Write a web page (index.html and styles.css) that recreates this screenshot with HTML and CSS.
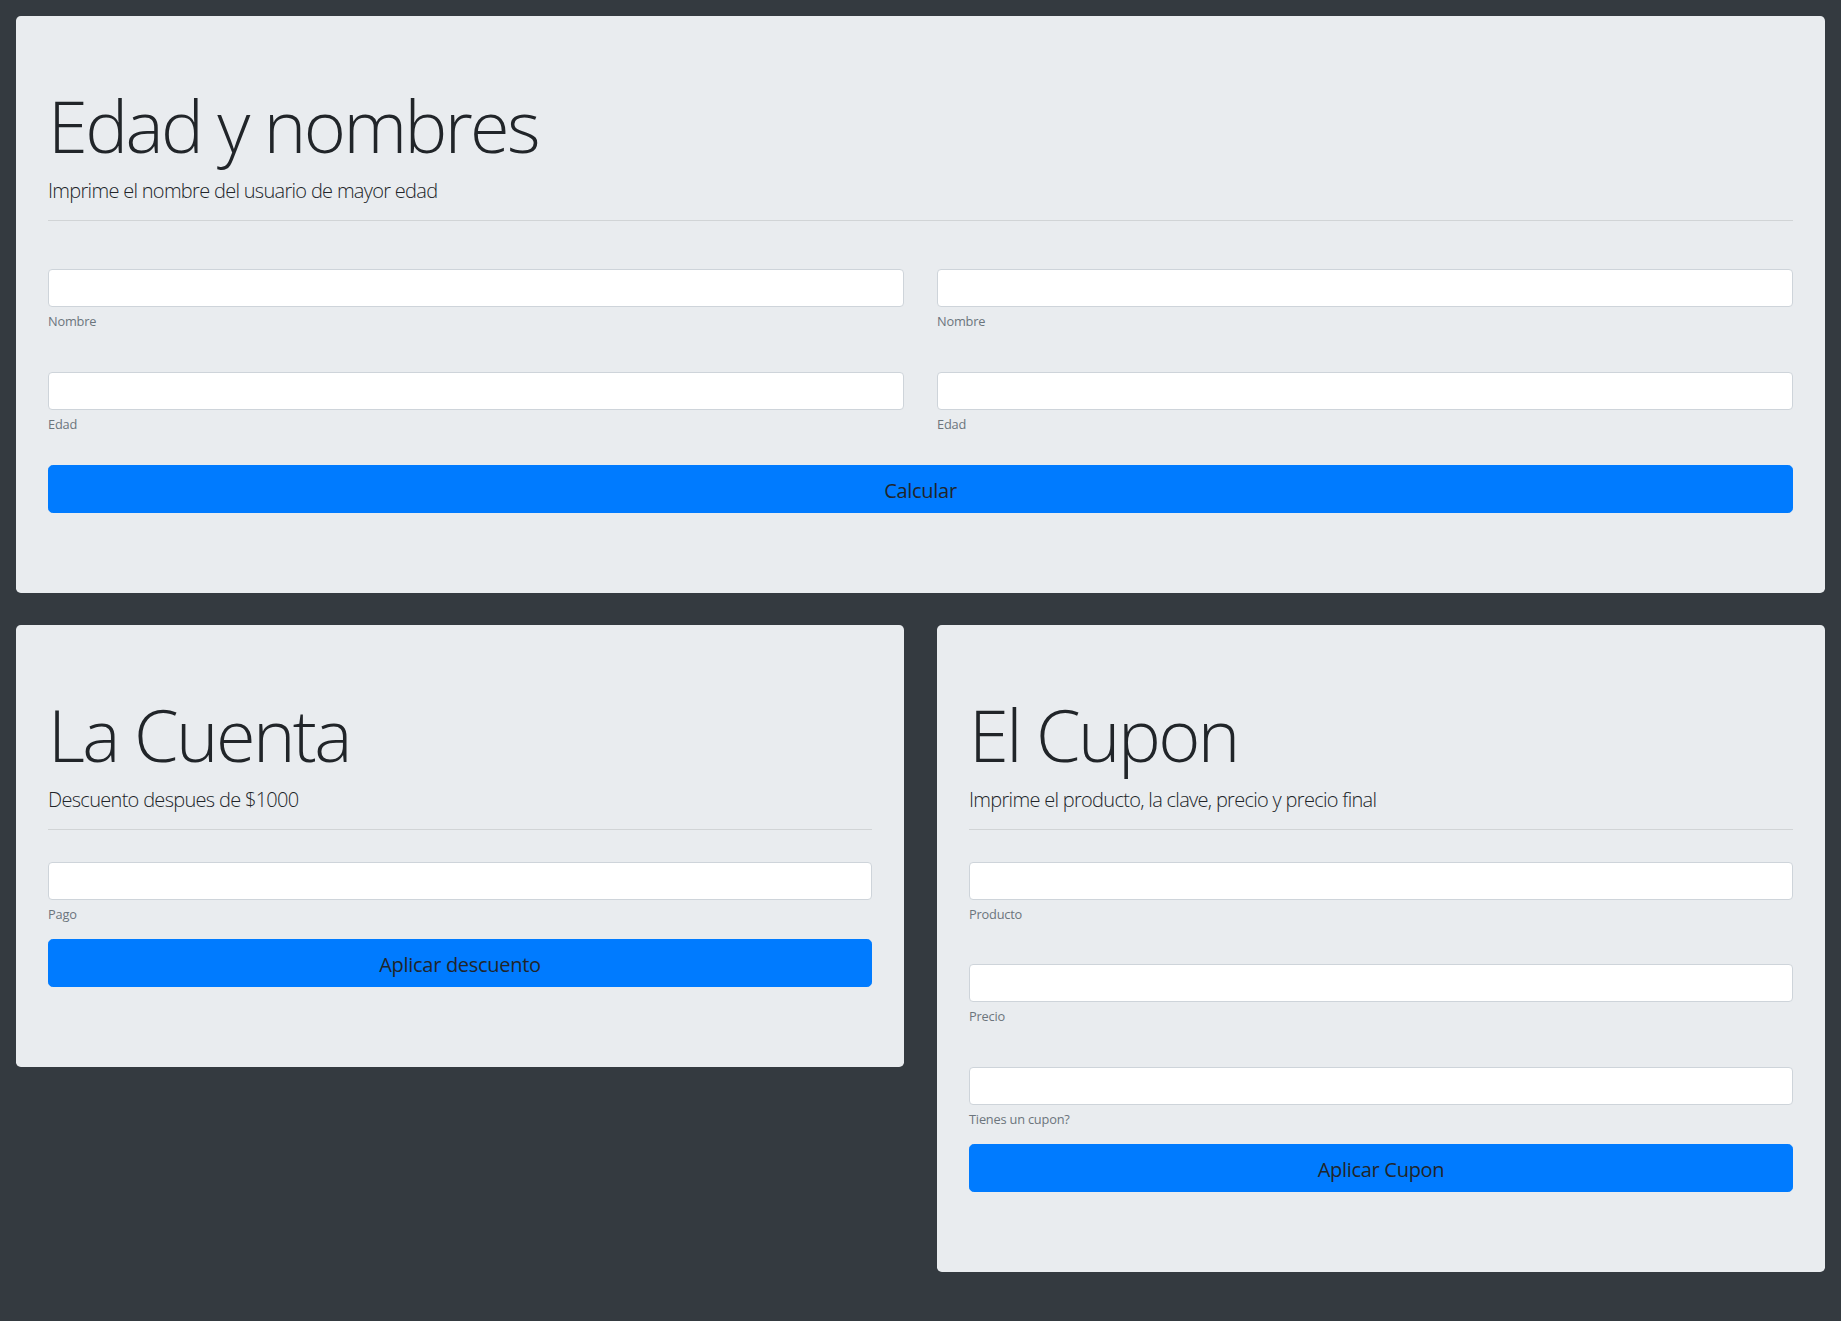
FILE: index.html
```html
<!DOCTYPE html>
<html lang="es">
<head>
<meta charset="utf-8">
<title>Ejercicios</title>
<link rel="stylesheet" href="styles.css">
</head>
<body>
<main class="page">
  <section class="jumbo">
    <h1 class="display">Edad y nombres</h1>
    <p class="lead">Imprime el nombre del usuario de mayor edad</p>
    <hr class="rule">
    <div class="pair-grid">
      <div class="field-stack">
        <div class="field">
          <input class="control" type="text">
          <small class="hint">Nombre</small>
        </div>
        <div class="field">
          <input class="control" type="text">
          <small class="hint">Edad</small>
        </div>
      </div>
      <div class="field-stack">
        <div class="field">
          <input class="control" type="text">
          <small class="hint">Nombre</small>
        </div>
        <div class="field">
          <input class="control" type="text">
          <small class="hint">Edad</small>
        </div>
      </div>
    </div>
    <button class="btn" type="button">Calcular</button>
  </section>

  <div class="card-row">
    <section class="jumbo">
      <h1 class="display">La Cuenta</h1>
      <p class="lead">Descuento despues de $1000</p>
      <hr class="rule">
      <div class="field-stack">
        <div class="field">
          <input class="control" type="text">
          <small class="hint">Pago</small>
        </div>
      </div>
      <button class="btn" type="button">Aplicar descuento</button>
    </section>

    <section class="jumbo">
      <h1 class="display">El Cupon</h1>
      <p class="lead">Imprime el producto, la clave, precio y precio final</p>
      <hr class="rule">
      <div class="field-stack">
        <div class="field">
          <input class="control" type="text">
          <small class="hint">Producto</small>
        </div>
        <div class="field">
          <input class="control" type="text">
          <small class="hint">Precio</small>
        </div>
        <div class="field">
          <input class="control" type="text">
          <small class="hint">Tienes un cupon?</small>
        </div>
      </div>
      <button class="btn" type="button">Aplicar Cupon</button>
    </section>
  </div>
</main>
</body>
</html>
```

FILE: styles.css
```css
* {
  box-sizing: border-box;
}

html, body {
  margin: 0;
  padding: 0;
}

body {
  background: #343a40;
  font-family: "Open Sans", "Noto Sans", "Liberation Sans", sans-serif;
  font-size: 16px;
  line-height: 1.5;
  color: #212529;
  min-height: 1321px;
}

.page {
  padding: 16px;
  display: flex;
  flex-direction: column;
  gap: 32px;
}

.jumbo {
  background: #e9ecef;
  border-radius: 4.8px;
  padding: 64px 32px;
  display: flex;
  flex-direction: column;
}

.display {
  margin: 0 0 6px;
  padding-top: 2px;
  font-size: 72px;
  font-weight: 300;
  line-height: 86.4px;
  letter-spacing: -2.6px;
  color: #212529;
}

.lead {
  margin: 0;
  padding-top: 2px;
  font-size: 20px;
  font-weight: 300;
  line-height: 30px;
  letter-spacing: -0.7px;
  color: #212529;
}

.rule {
  margin: 14px 0 32px;
  border: 0;
  border-top: 1px solid rgba(0, 0, 0, 0.1);
  height: 0;
}

.pair-grid {
  display: grid;
  grid-template-columns: 1fr 1fr;
  column-gap: 33px;
  padding: 16px 0;
}

.field-stack {
  display: flex;
  flex-direction: column;
  gap: 41px;
}

.field {
  display: flex;
  flex-direction: column;
}

.control {
  display: block;
  width: 100%;
  height: 38px;
  margin: 0;
  padding: 6px 12px;
  font: inherit;
  background: #fff;
  border: 1px solid #ced4da;
  border-radius: 4px;
}

.hint {
  display: block;
  margin-top: 5px;
  font-size: 12.8px;
  line-height: 18.2px;
  color: #6c757d;
  letter-spacing: -0.2px;
}

.btn {
  display: block;
  width: 100%;
  height: 48px;
  margin: 16px 0 16px;
  padding: 10px 16px 6px;
  font-family: inherit;
  font-size: 20px;
  line-height: 30px;
  font-weight: 400;
  color: #212529;
  background: #007bff;
  border: 1px solid #007bff;
  border-radius: 4.8px;
  letter-spacing: -0.3px;
}

.card-row {
  display: grid;
  grid-template-columns: 1fr 1fr;
  column-gap: 33px;
  align-items: start;
}
```
